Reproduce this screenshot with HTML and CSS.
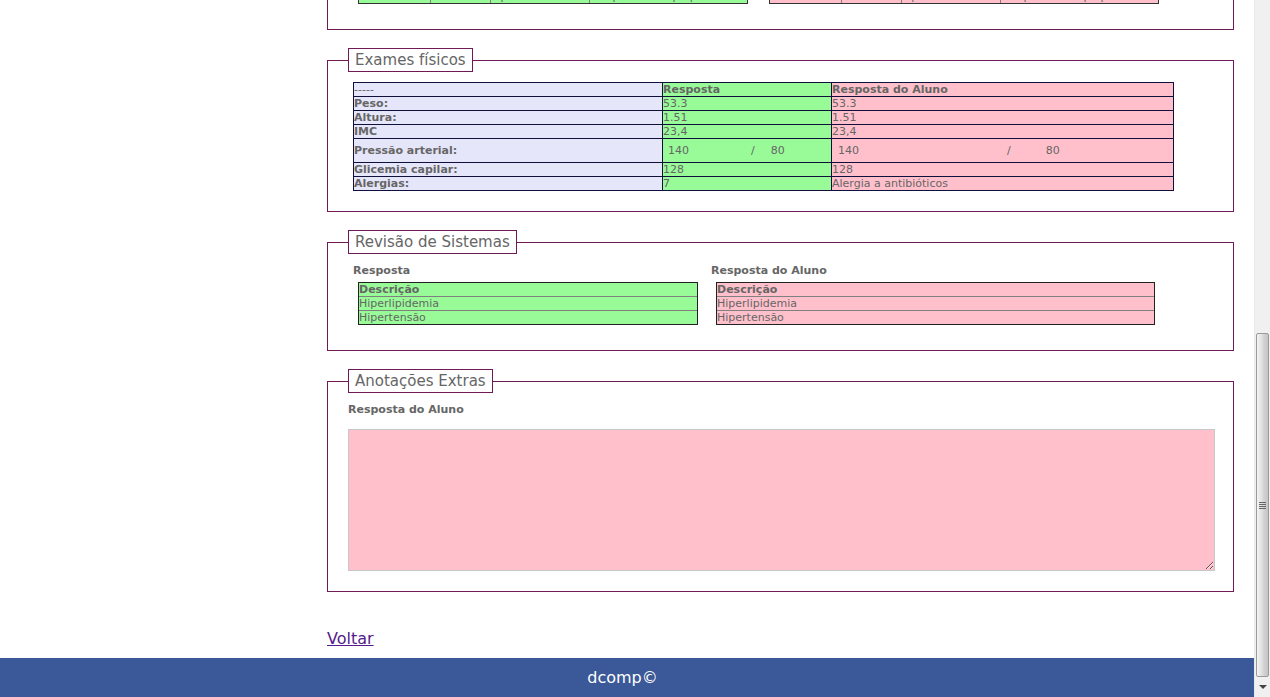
FILE: index.html
```html
<!DOCTYPE html>
<html lang="pt-BR">
<head>
<meta charset="utf-8">
<title>Caso clínico - correção</title>
<link rel="stylesheet" href="styles.css">
</head>
<body>
<div class="window">
  <main class="main">
    <div class="content">
      <fieldset class="fs">
        <legend>Hábitos de Vida</legend>
        <div class="pair pair-half">
          <div class="col">
            <div class="lbl">Resposta</div>
            <table class="habits ok">
              <tr><th>Hábito</th><th>Faz uso?</th><th>Tipo</th><th>Tempo</th></tr>
              <tr><td>Tabagismo</td><td>Não</td><td>Tipo de cigarro:</td><td>Há quanto tempo parou:</td></tr>
              <tr><td>Álcool</td><td>Não</td><td>Tipo de bebida:</td><td>Há quanto tempo parou:</td></tr>
            </table>
          </div>
          <div class="col">
            <div class="lbl">Resposta do Aluno</div>
            <table class="habits al">
              <tr><th>Hábito</th><th>Faz uso?</th><th>Tipo</th><th>Tempo</th></tr>
              <tr><td>Tabagismo</td><td>Não</td><td>Tipo de cigarro:</td><td>Há quanto tempo parou:</td></tr>
              <tr><td>Álcool</td><td>Não</td><td>Tipo de bebida:</td><td>Há quanto tempo parou:</td></tr>
            </table>
          </div>
        </div>
      </fieldset>

      <fieldset class="fs">
        <legend>Exames físicos</legend>
        <table class="exam">
          <colgroup><col class="c1"><col class="c2"><col class="c3"></colgroup>
          <tr><td class="lab norm">-----</td><td class="ok b">Resposta</td><td class="al b">Resposta do Aluno</td></tr>
          <tr><td class="lab">Peso:</td><td class="ok">53.3</td><td class="al">53.3</td></tr>
          <tr><td class="lab">Altura:</td><td class="ok">1.51</td><td class="al">1.51</td></tr>
          <tr><td class="lab">IMC</td><td class="ok">23,4</td><td class="al">23,4</td></tr>
          <tr class="tall">
            <td class="lab">Pressão arterial:</td>
            <td class="ok"><span class="pa pa-ok"><span class="v1">140</span><span class="sl">/</span><span class="v2">80</span></span></td>
            <td class="al"><span class="pa pa-al"><span class="v1">140</span><span class="sl">/</span><span class="v2">80</span></span></td>
          </tr>
          <tr><td class="lab">Glicemia capilar:</td><td class="ok">128</td><td class="al">128</td></tr>
          <tr><td class="lab">Alergias:</td><td class="ok">7</td><td class="al">Alergia a antibióticos</td></tr>
        </table>
      </fieldset>

      <fieldset class="fs">
        <legend>Revisão de Sistemas</legend>
        <div class="pair pair-rev">
          <div class="col">
            <div class="lbl">Resposta</div>
            <table class="list ok">
              <tr><th>Descrição</th></tr>
              <tr><td>Hiperlipidemia</td></tr>
              <tr><td>Hipertensão</td></tr>
            </table>
          </div>
          <div class="col">
            <div class="lbl">Resposta do Aluno</div>
            <table class="list al">
              <tr><th>Descrição</th></tr>
              <tr><td>Hiperlipidemia</td></tr>
              <tr><td>Hipertensão</td></tr>
            </table>
          </div>
        </div>
      </fieldset>

      <fieldset class="fs fs-notes">
        <legend>Anotações Extras</legend>
        <div class="lbl lbl-flat">Resposta do Aluno</div>
        <textarea class="notes" readonly></textarea>
      </fieldset>

      <div class="back"><a href="#" class="back-link">Voltar</a></div>
    </div>
    <footer class="footer">dcomp©</footer>
  </main>
  <aside class="sb">
    <div class="sb-track"></div>
    <div class="sb-thumb"><span class="grip"></span></div>
    <div class="sb-btn"><span class="arrow"></span></div>
  </aside>
</div>
</body>
</html>
```

FILE: styles.css
```css
html, body {
  margin: 0;
  padding: 0;
  height: 697px;
  overflow: hidden;
}

body {
  font-family: "DejaVu Sans", Verdana, sans-serif;
  font-size: 11px;
  color: #666;
  background: #fff;
}

.window {
  display: flex;
  height: 697px;
}

.main {
  flex: 1;
  display: flex;
  flex-direction: column;
  justify-content: flex-end;
  overflow: hidden;
  min-width: 0;
}

.content {
  flex-shrink: 0;
  padding: 0 20px 0 327px;
}

/* fieldsets */
.fs {
  margin: 0;
  padding: 0 20px 20px;
  border: 1px solid #6f1a56;
  min-width: 0;
}

.fs + .fs {
  margin-top: 18px;
}

.fs legend {
  font-size: 15px;
  line-height: 21px;
  padding: 1px 6px 0 6px;
  border: 1px solid #6f1a56;
  color: #666;
}

.lbl {
  font-weight: bold;
  line-height: 12px;
  padding-top: 1px;
  margin-top: 10px;
}

/* two-column pairs */
.pair {
  display: grid;
  width: 95%;
  margin-left: 5px;
}

.pair-half {
  grid-template-columns: 1fr 1fr;
  padding-bottom: 5px;
}

.pair-rev {
  grid-template-columns: 358px 1fr;
  padding-bottom: 5px;
}

.col > table {
  margin-top: 5px;
  margin-left: 5px;
  width: 95%;
}

.pair-rev .col + .col > table {
  width: 439px;
}

.ok { background: #98fb98; }
.al { background: #ffc0cb; }

/* habit tables */
.habits {
  border-collapse: separate;
  border-spacing: 0;
  border: 1px solid #333;
  table-layout: fixed;
}

.habits th,
.habits td {
  padding: 1px 0 0;
  line-height: 12px;
  text-align: left;
  white-space: nowrap;
  overflow: hidden;
}

.habits th + th,
.habits td + td {
  border-left: 1px solid #808080;
}

.habits tr + tr td {
  border-top: 1px solid #808080;
}

.habits th:nth-child(1), .habits td:nth-child(1) { width: 71px; }
.habits th:nth-child(2), .habits td:nth-child(2) { width: 59px; }
.habits th:nth-child(3), .habits td:nth-child(3) { width: 98px; }

/* exam table */
.exam {
  border-collapse: collapse;
  table-layout: fixed;
  width: 820px;
  margin: 10px 0 0 5px;
}

.exam .c1 { width: 309px; }
.exam .c2 { width: 169px; }
.exam .c3 { width: 342px; }

.exam td {
  border: 1px solid #10103c;
  padding: 1px 0 0;
  line-height: 12px;
  height: 12px;
  white-space: nowrap;
}

.exam .lab {
  background: #e6e6fa;
  font-weight: bold;
}

.exam .lab.norm { font-weight: normal; }
.exam .b { font-weight: bold; }

.exam .tall td {
  height: 23px;
  padding: 0;
}

.pa {
  display: flex;
  align-items: center;
  height: 23px;
  padding-top: 1px;
  box-sizing: border-box;
}

.pa .v1 { box-sizing: border-box; }
.pa-ok .v1 { width: 88px; padding-left: 5px; }
.pa-ok .v2 { margin-left: 16px; }
.pa-al .v1 { width: 175px; padding-left: 6px; }
.pa-al .v2 { margin-left: 35px; }

/* list tables */
.list {
  border-collapse: separate;
  border-spacing: 0;
  border: 1px solid #222;
}

.list th,
.list td {
  padding: 1px 0 0;
  line-height: 12px;
  text-align: left;
}

.list td {
  border-top: 1px solid #808080;
}

/* notes */
.lbl-flat { margin-top: 10px; }

.notes {
  display: block;
  box-sizing: border-box;
  width: 867px;
  height: 142px;
  margin: 13px 0 0;
  border: 1px solid #c8c8c8;
  background: #ffc0cb;
  padding: 2px;
  font-family: "DejaVu Sans", Verdana, sans-serif;
  font-size: 11px;
  color: #666;
}

/* back link */
.back {
  padding: 37px 0 10px;
  font-size: 16px;
  line-height: 19px;
}

.back-link {
  color: #551a8b;
  text-decoration: underline;
}

/* footer */
.footer {
  flex-shrink: 0;
  height: 39px;
  line-height: 39px;
  padding-right: 9px;
  background: #3b5998;
  color: #fff;
  text-align: center;
  font-size: 16px;
}

/* fake scrollbar */
.sb {
  width: 16px;
  flex-shrink: 0;
  display: flex;
  flex-direction: column;
  background: #f0f0f0;
  border-left: 1px solid #e8e8e8;
  box-sizing: border-box;
}

.sb-track {
  height: 333px;
}

.sb-thumb {
  height: 344px;
  margin: 0 1px;
  box-sizing: border-box;
  border: 1px solid #9a9a9a;
  border-radius: 2px;
  background: linear-gradient(to right, #f4f4f4 0%, #e2e2e2 40%, #cfcfcf 70%, #c4c4c4 100%);
  display: flex;
  align-items: center;
  justify-content: center;
}

.grip {
  width: 7px;
  height: 7px;
  background: repeating-linear-gradient(to bottom, #666 0 1px, transparent 1px 2px);
}

.sb-btn {
  height: 20px;
  display: flex;
  align-items: center;
  justify-content: center;
  background: #f0f0f0;
}

.arrow {
  width: 0;
  height: 0;
  border-left: 4px solid transparent;
  border-right: 4px solid transparent;
  border-top: 4px solid #444;
}
```
